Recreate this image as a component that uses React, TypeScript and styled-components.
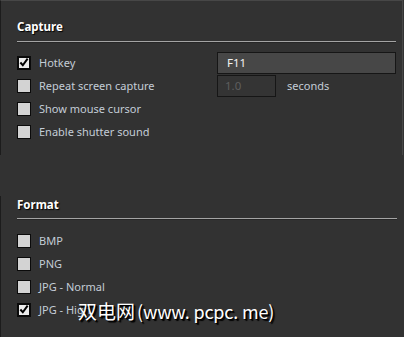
import styled, { createGlobalStyle } from "styled-components";

const GlobalStyle = createGlobalStyle`
  html, body {
    margin: 0;
    padding: 0;
    background: #323232;
  }
  * {
    box-sizing: border-box;
  }
`;

const Window = styled.div`
  position: relative;
  width: 404px;
  height: 337px;
  overflow: hidden;
  background: #323232;
  font-family: "Noto Sans", "Open Sans", sans-serif;
  font-size: 11px;
`;

const Panel = styled.section<{ $top?: boolean }>`
  height: ${({ $top }) => ($top ? "155px" : "141px")};
  margin-top: ${({ $top }) => ($top ? "0" : "41px")};
  padding: ${({ $top }) => ($top ? "18px" : "1px")} 6px 0 16px;
  border-left: 1px solid #1c1c1c;
  border-top: ${({ $top }) => ($top ? "1px solid #474747" : "none")};
  border-right: ${({ $top }) => ($top ? "1px solid #474747" : "none")};
  margin-right: 1px;
`;

const Title = styled.h3`
  margin: 0;
  height: 16px;
  line-height: 16px;
  font-size: 11.5px;
  font-weight: 700;
  color: #ffffff;
  text-shadow: 1px 1px 1px #000;
`;

const Rule = styled.div<{ $gap: number }>`
  height: 1px;
  margin-top: ${({ $gap }) => $gap}px;
  margin-bottom: ${({ $gap }) => ($gap === 6 ? 9 : 10)}px;
  background: #a4a4a4;
  box-shadow: 0 1px 0 #262626;
`;

const Row = styled.div`
  display: grid;
  grid-template-columns: 200px auto;
  align-items: center;
  height: 23px;
`;

const Option = styled.label`
  display: flex;
  align-items: center;
  gap: 8px;
  color: #c4cdd7;
  white-space: nowrap;
`;

const Box = styled.span<{ $checked?: boolean }>`
  display: flex;
  align-items: center;
  justify-content: center;
  width: 14px;
  height: 14px;
  border: ${({ $checked }) => ($checked ? "2px" : "1px")} solid #0a0a0a;
  background: ${({ $checked }) => ($checked ? "#ececec" : "#d3d3d3")};
`;

const Field = styled.div`
  display: flex;
  align-items: center;
  gap: 11px;
  color: #c4cdd7;
`;

const Input = styled.div<{ $disabled?: boolean }>`
  width: ${({ $disabled }) => ($disabled ? "59px" : "179px")};
  height: 22px;
  line-height: 20px;
  padding-left: ${({ $disabled }) => ($disabled ? "7px" : "9px")};
  border: 1px solid #161616;
  background: ${({ $disabled }) => ($disabled ? "#343434" : "#474747")};
  color: ${({ $disabled }) => ($disabled ? "#5e5e5e" : "#f2f2f2")};
  font-size: 11.5px;
`;

const Watermark = styled.div`
  position: absolute;
  left: 78px;
  top: 299px;
  font-family: "Noto Sans CJK SC", sans-serif;
  font-size: 19px;
  line-height: 24px;
  color: #ffffff;
  text-shadow: 1px 1px 0 #000, 2px 2px 1px #000;
  white-space: nowrap;
`;

const Latin = styled.span`
  margin-left: 2px;
  font-size: 18px;
  letter-spacing: -0.2px;
`;

const Check = () => (
  <svg width="11" height="11" viewBox="0 0 11 11">
    <path d="M1.5 5.5 L4.2 8.5 L9.5 1.2" fill="none" stroke="#000" strokeWidth="2.2" />
  </svg>
);

type Item = { label: string; checked?: boolean; extra?: React.ReactNode };

const capture: Item[] = [
  { label: "Hotkey", checked: true, extra: <Input>F11</Input> },
  {
    label: "Repeat screen capture",
    extra: (
      <Field>
        <Input $disabled>1.0</Input>
        seconds
      </Field>
    ),
  },
  { label: "Show mouse cursor" },
  { label: "Enable shutter sound" },
];

const format: Item[] = [
  { label: "BMP" },
  { label: "PNG" },
  { label: "JPG - Normal" },
  { label: "JPG - High", checked: true },
];

const Options = ({ items }: { items: Item[] }) => (
  <>
    {items.map((item) => (
      <Row key={item.label}>
        <Option>
          <Box $checked={item.checked}>{item.checked && <Check />}</Box>
          {item.label}
        </Option>
        {item.extra}
      </Row>
    ))}
  </>
);

export default function App() {
  return (
    <>
      <GlobalStyle />
      <Window>
        <Panel $top>
          <Title>Capture</Title>
          <Rule $gap={6} />
          <Options items={capture} />
        </Panel>
        <Panel>
          <Title>Format</Title>
          <Rule $gap={5} />
          <Options items={format} />
        </Panel>
        <Watermark>
          双电网<Latin>(www. pcpc. me)</Latin>
        </Watermark>
      </Window>
    </>
  );
}
